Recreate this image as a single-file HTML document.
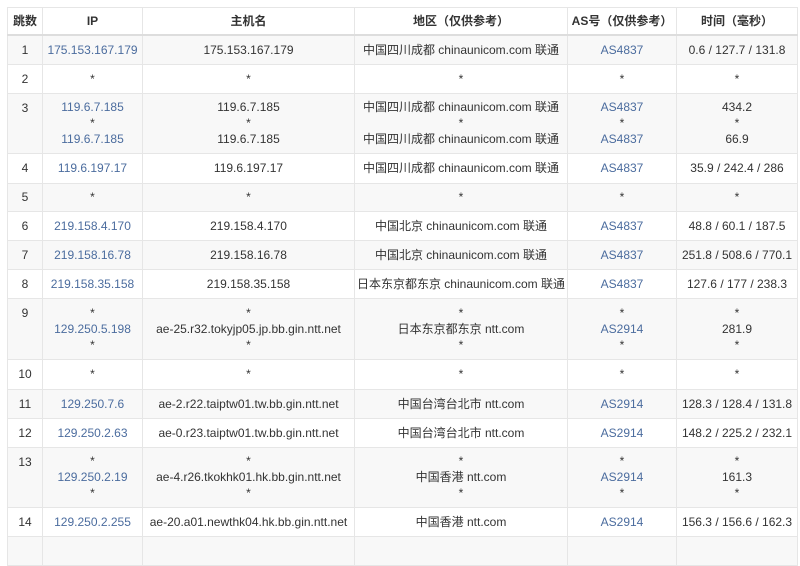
<!DOCTYPE html>
<html><head><meta charset="utf-8"><style>
body{margin:0;background:#fff;font-family:"Liberation Sans","Noto Sans CJK SC",sans-serif;font-size:12px;color:#333;overflow:hidden;}
table{position:absolute;left:7px;top:7px;border-collapse:collapse;table-layout:fixed;width:790px;}
td,th{border:1px solid #e6e6e6;text-align:center;padding:0;line-height:16px;vertical-align:middle;white-space:nowrap;overflow:hidden;}
th{height:26px;font-weight:bold;border-bottom:2px solid #ddd;}
tr.o td{background:#f8f8f8;}
td.a{color:#4b6c9e;}
td.a s{color:#333;text-decoration:none;}
td.t{vertical-align:top;padding-top:6px;}
</style></head><body>
<table>
<colgroup><col style="width:35px"><col style="width:100px"><col style="width:212px"><col style="width:213px"><col style="width:109px"><col style="width:121px"></colgroup>
<tr><th>跳数</th><th>IP</th><th>主机名</th><th>地区（仅供参考）</th><th>AS号（仅供参考）</th><th>时间（毫秒）</th></tr>
<tr class="o" style="height:29px"><td>1</td><td class="a">175.153.167.179</td><td>175.153.167.179</td><td>中国四川成都 chinaunicom.com 联通</td><td class="a">AS4837</td><td>0.6 / 127.7 / 131.8</td></tr>
<tr style="height:29px"><td>2</td><td>*</td><td>*</td><td>*</td><td>*</td><td>*</td></tr>
<tr class="o" style="height:60px"><td class="t">3</td><td class="a">119.6.7.185<br><s>*</s><br>119.6.7.185</td><td>119.6.7.185<br>*<br>119.6.7.185</td><td>中国四川成都 chinaunicom.com 联通<br>*<br>中国四川成都 chinaunicom.com 联通</td><td class="a">AS4837<br><s>*</s><br>AS4837</td><td>434.2<br>*<br>66.9</td></tr>
<tr style="height:30px"><td>4</td><td class="a">119.6.197.17</td><td>119.6.197.17</td><td>中国四川成都 chinaunicom.com 联通</td><td class="a">AS4837</td><td>35.9 / 242.4 / 286</td></tr>
<tr class="o" style="height:28px"><td>5</td><td>*</td><td>*</td><td>*</td><td>*</td><td>*</td></tr>
<tr style="height:29px"><td>6</td><td class="a">219.158.4.170</td><td>219.158.4.170</td><td>中国北京 chinaunicom.com 联通</td><td class="a">AS4837</td><td>48.8 / 60.1 / 187.5</td></tr>
<tr class="o" style="height:29px"><td>7</td><td class="a">219.158.16.78</td><td>219.158.16.78</td><td>中国北京 chinaunicom.com 联通</td><td class="a">AS4837</td><td>251.8 / 508.6 / 770.1</td></tr>
<tr style="height:29px"><td>8</td><td class="a">219.158.35.158</td><td>219.158.35.158</td><td>日本东京都东京 chinaunicom.com 联通</td><td class="a">AS4837</td><td>127.6 / 177 / 238.3</td></tr>
<tr class="o" style="height:61px"><td class="t">9</td><td class="a"><s>*</s><br>129.250.5.198<br><s>*</s></td><td>*<br>ae-25.r32.tokyjp05.jp.bb.gin.ntt.net<br>*</td><td>*<br>日本东京都东京 ntt.com<br>*</td><td class="a"><s>*</s><br>AS2914<br><s>*</s></td><td>*<br>281.9<br>*</td></tr>
<tr style="height:30px"><td>10</td><td>*</td><td>*</td><td>*</td><td>*</td><td>*</td></tr>
<tr class="o" style="height:29px"><td>11</td><td class="a">129.250.7.6</td><td>ae-2.r22.taiptw01.tw.bb.gin.ntt.net</td><td>中国台湾台北市 ntt.com</td><td class="a">AS2914</td><td>128.3 / 128.4 / 131.8</td></tr>
<tr style="height:29px"><td>12</td><td class="a">129.250.2.63</td><td>ae-0.r23.taiptw01.tw.bb.gin.ntt.net</td><td>中国台湾台北市 ntt.com</td><td class="a">AS2914</td><td>148.2 / 225.2 / 232.1</td></tr>
<tr class="o" style="height:60px"><td class="t">13</td><td class="a"><s>*</s><br>129.250.2.19<br><s>*</s></td><td>*<br>ae-4.r26.tkokhk01.hk.bb.gin.ntt.net<br>*</td><td>*<br>中国香港 ntt.com<br>*</td><td class="a"><s>*</s><br>AS2914<br><s>*</s></td><td>*<br>161.3<br>*</td></tr>
<tr style="height:29px"><td>14</td><td class="a">129.250.2.255</td><td>ae-20.a01.newthk04.hk.bb.gin.ntt.net</td><td>中国香港 ntt.com</td><td class="a">AS2914</td><td>156.3 / 156.6 / 162.3</td></tr>
<tr class="o" style="height:29px"><td></td><td></td><td></td><td></td><td></td><td></td></tr>
</table>
</body></html>
